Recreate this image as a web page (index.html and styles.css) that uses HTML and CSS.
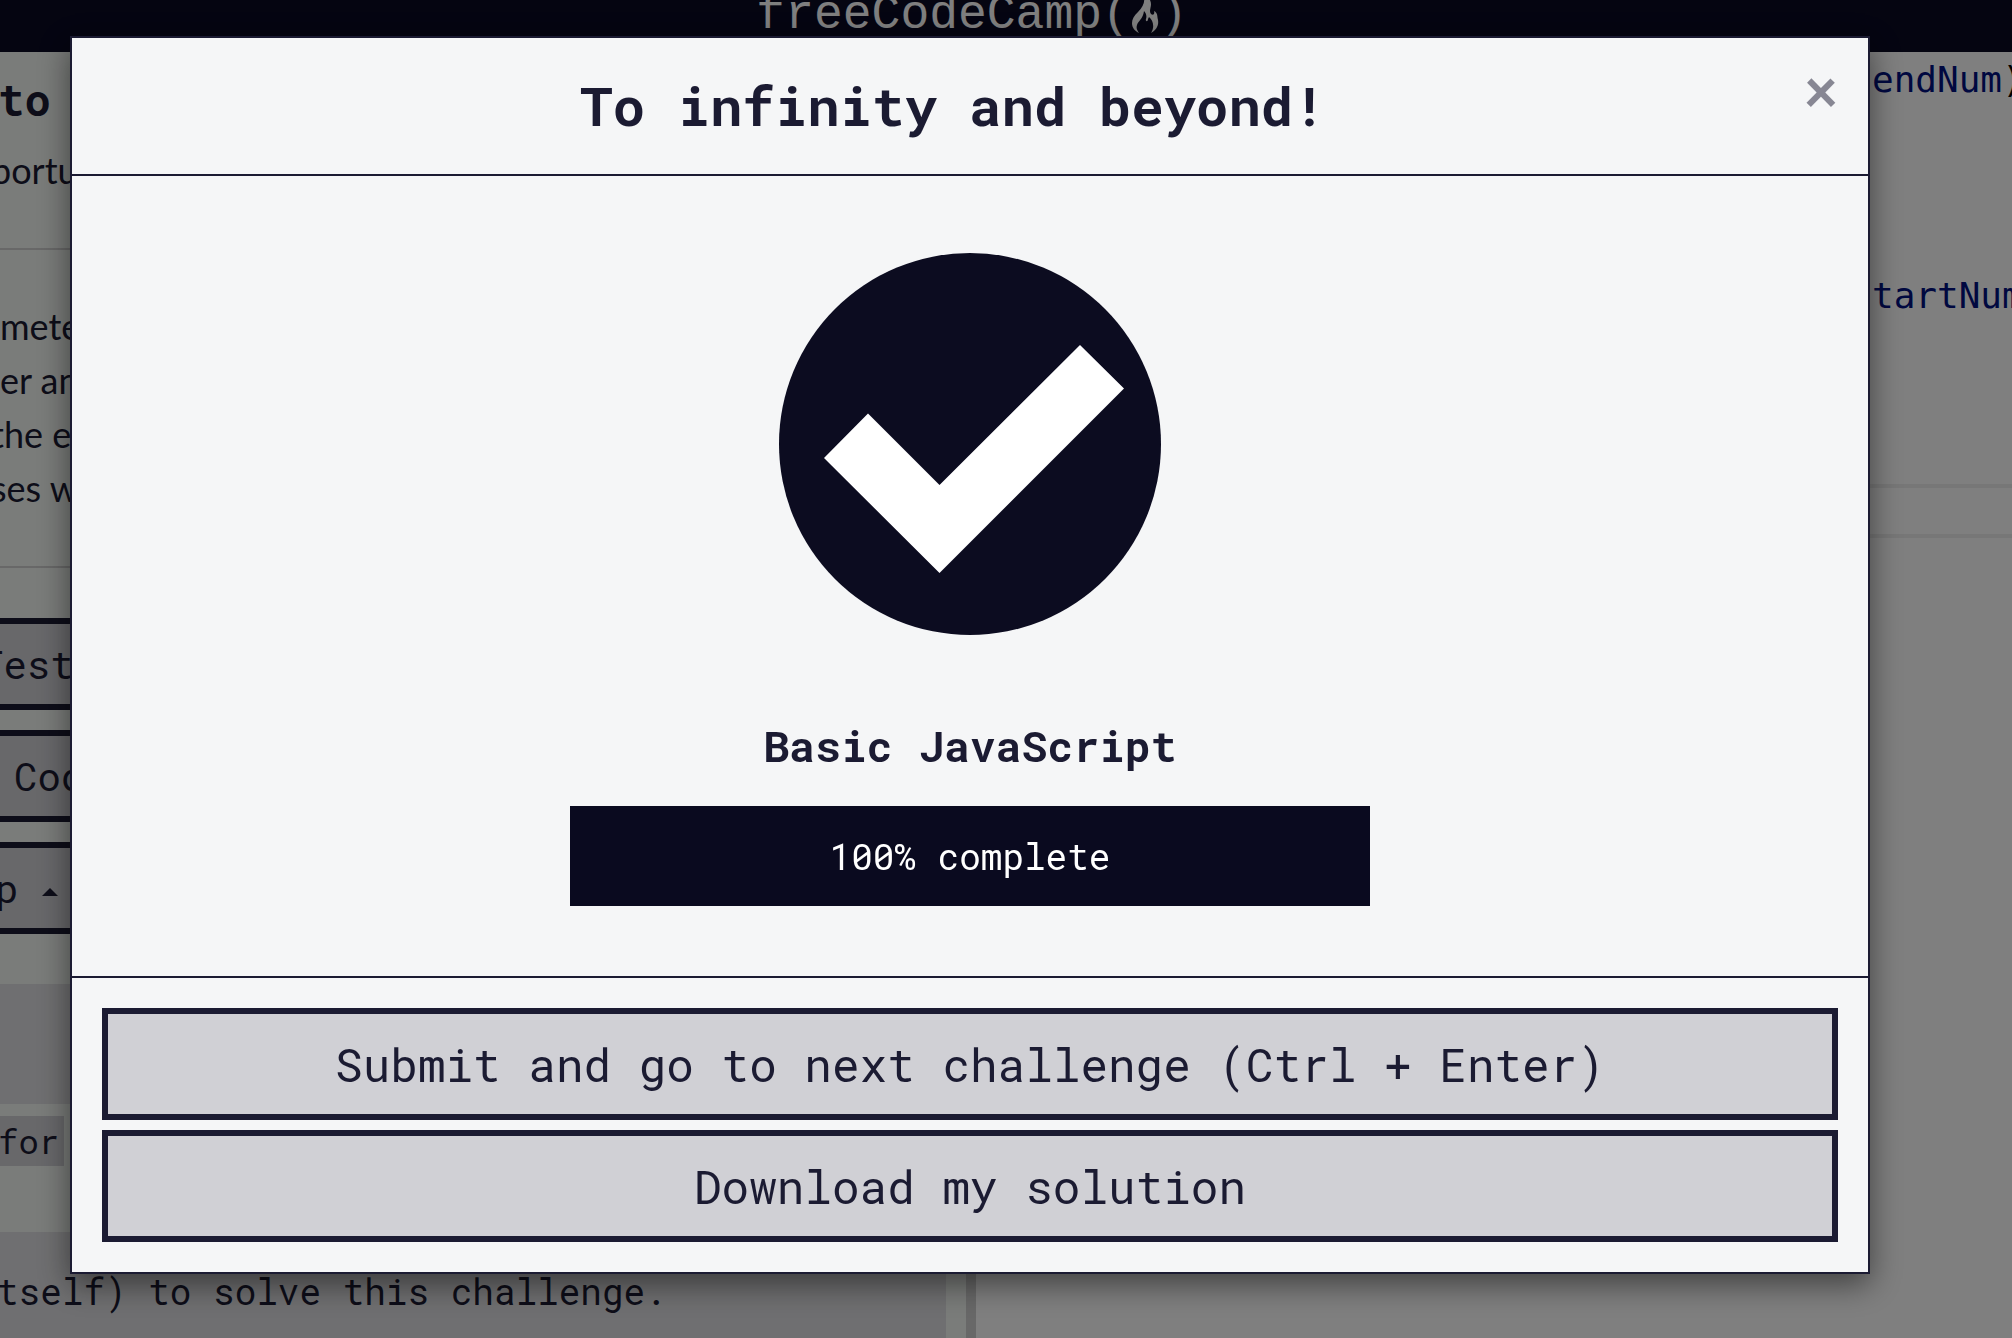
FILE: index.html
```html
<!DOCTYPE html>
<html lang="en">
<head>
<meta charset="utf-8">
<title>freeCodeCamp - Basic JavaScript</title>
<link rel="stylesheet" href="styles.css">
</head>
<body>
<div class="page">
  <header class="site-header">
    <a class="logo" href="#">freeCodeCamp(<svg class="flame" viewBox="0 0 28 36" aria-hidden="true"><path d="M13 0C14 5 12 10 7 15C3 19 1 22 1 26C1 31 4 34 8 36C6 33 5 31 6 28C7 24 12 22 13 14C15 16 16 19 15 22C14 25 17 25 17 22L18 20C22 23 24 30 20 36C25 33 28 29 27 23C26 19 27 16 23 14C24 17 22 19 20 17C17 13 22 9 19 3L17 0Z"/></svg>)</a>
  </header>
  <main class="workspace">
    <section class="lesson">
      <h1 class="lesson-title">to</h1>
      <p class="lesson-text cut">portu</p>
      <hr>
      <div class="lesson-text">
        <div>meter</div>
        <div>er and</div>
        <div class="cut">the en</div>
        <div class="cut">ses wh</div>
      </div>
      <hr>
      <div class="actions">
        <button class="action action-run" type="button">Test</button>
        <button class="action action-reset" type="button">Code</button>
        <button class="action action-help" type="button">p <svg class="caret" viewBox="0 0 16 8" aria-hidden="true"><path d="M0 8L8 0L16 8Z"/></svg></button>
      </div>
      <div class="result result-top"></div>
      <p class="hint"><code>for</code></p>
      <div class="result">tself) to solve this challenge.</div>
    </section>
    <div class="splitter"></div>
    <section class="editor">
      <div class="code-pane">
        <div class="code-line"><span class="name">endNum</span>)</div>
        <div class="code-line name">tartNum</div>
      </div>
      <div class="pane-gap"></div>
      <div class="console"></div>
    </section>
  </main>
</div>
<div class="backdrop">
  <div class="modal" role="dialog" aria-modal="true" aria-labelledby="modal-title">
    <header class="modal-header">
      <h2 class="modal-title" id="modal-title">To infinity and beyond!</h2>
      <button class="close" type="button" aria-label="Close">×</button>
    </header>
    <div class="modal-body">
      <svg class="success" viewBox="0 0 382 382" aria-hidden="true"><circle cx="191" cy="191" r="191" fill="#0c0c20"/><path fill="#fff" d="M89 160.500L160.500 232L301 92L345 135.500L160.500 320L45 205Z"/></svg>
      <h3 class="block-name">Basic JavaScript</h3>
      <div class="progress"><div class="progress-fill" style="width:100%">100% complete</div></div>
    </div>
    <footer class="modal-footer">
      <button class="cta" type="button">Submit and go to next challenge (Ctrl + Enter)</button>
      <button class="cta" type="button">Download my solution</button>
    </footer>
  </div>
</div>
</body>
</html>
```

FILE: styles.css
```css
:root {
  --mono: "Roboto Mono", "DejaVu Sans Mono", monospace;
  --ink: #1b1b32;
  --paper: #f5f6f7;
  --button: #d0d0d5;
}
* { box-sizing: border-box; }
body { margin: 0; overflow: hidden; color: var(--ink); font: 36px/54px Lato, sans-serif; }
button { font-family: var(--mono); color: inherit; }
h1, h2, h3, p { margin: 0; }

.page { height: 100vh; display: flex; flex-direction: column; overflow: hidden; }
.site-header { flex: none; display: flex; justify-content: center; height: 52px; padding-right: 68px; background: #0a0a23; }
.logo { display: flex; height: 30px; align-items: center; color: #fff; text-decoration: none; font: 48px/30px "Liberation Mono", monospace; white-space: nowrap; }
.flame { width: 28px; height: 36px; fill: #fff; }

.workspace { flex: 1; min-height: 0; display: flex; }
.lesson { flex: 0 0 48%; min-width: 0; padding-right: 20px; background: #f5f9f5; overflow: hidden; white-space: nowrap; }
.lesson-title { padding: 17px 0 14px; font: bold 44px/60px var(--mono); text-indent: -2px; }
.lesson-text { padding-bottom: 1px; }
.cut { margin-left: -9px; }
.lesson hr { margin: 50px 0 49px; border: 0; border-top: 2px solid #d0d0d0; }
.actions { display: flex; flex-direction: column; gap: 20px; padding-top: 1px; }
.action { height: 92px; padding: 0; border: 6px solid var(--ink); border-left: 0; background: var(--button); font-size: 39px; text-align: left; }
.action-run { text-indent: -20px; }
.action-reset { text-indent: 14px; }
.action-help { text-indent: -5px; }
.caret { width: 16px; height: 8px; margin-bottom: 7px; fill: currentColor; }
.result { height: 120px; padding: 32px 0; background: #dfdfe2; font-family: var(--mono); text-indent: -3px; }
.result-top { margin-top: 50px; }
.hint { height: 128px; padding-top: 12px; }
.hint code { display: block; width: 64px; height: 50px; background: var(--button); font: 34px/50px var(--mono); text-indent: -2px; }
.splitter { flex: none; width: 10px; background: #d0d0d0; }

.editor { flex: 1; min-width: 0; display: flex; flex-direction: column; background: #fff; }
.code-pane { height: 432px; display: flex; flex-direction: column; align-items: flex-end; gap: 160px; overflow: hidden; }
.code-line { width: 140px; font: 36px/56px "DejaVu Sans Mono", monospace; color: #000; white-space: nowrap; overflow: hidden; }
.code-line.name, .name { color: #001080; }
.pane-gap { height: 54px; border: solid #eee; border-width: 4px 0; }
.console { flex: 1; }

.backdrop { position: fixed; inset: 0; padding: 36px 142px 64px 70px; background: rgba(0, 0, 0, .5); overflow: hidden; }
.modal { border: 2px solid var(--ink); background: var(--paper); box-shadow: 0 10px 30px rgba(0, 0, 0, .5); }
.modal-header { display: flex; align-items: flex-start; padding: 29px 30px 31px; border-bottom: 2px solid var(--ink); }
.modal-title { flex: 1; font: bold 54px/76px var(--mono); text-align: center; }
.close { display: flex; justify-content: center; width: 34px; padding: 0; border: 0; background: none; font: 900 60px/46px Lato, sans-serif; opacity: .5; }
.modal-body { display: flex; flex-direction: column; align-items: center; padding: 77px 30px 70px; }
.success { width: 382px; height: 382px; }
.block-name { margin: 80px 0 30px; font: bold 43px/61px var(--mono); }
.progress { width: 800px; max-width: 100%; }
.progress-fill { height: 100px; background: #0a0a1f; color: #fff; font: 36px/100px var(--mono); text-align: center; }
.modal-footer { display: flex; flex-direction: column; gap: 10px; padding: 30px; border-top: 2px solid var(--ink); }
.cta { height: 112px; border: 6px solid var(--ink); background: var(--button); font-size: 46px; }
```
